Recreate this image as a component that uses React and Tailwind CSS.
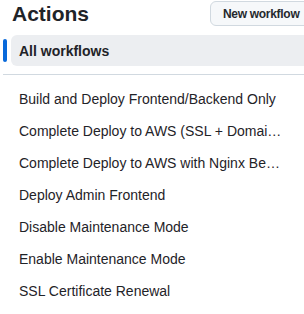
export default function App() {
  const items = [
    "Build and Deploy Frontend/Backend Only",
    "Complete Deploy to AWS (SSL + Domai…",
    "Complete Deploy to AWS with Nginx Be…",
    "Deploy Admin Frontend",
    "Disable Maintenance Mode",
    "Enable Maintenance Mode",
    "SSL Certificate Renewal",
  ];
  return (
    <div className="w-[304px] h-[314px] overflow-hidden bg-white" style={{ fontFamily: '"Liberation Sans", sans-serif' }}>
      <div className="w-[314px]">
        <div className="flex items-start justify-between h-[35px]">
          <h1 className="pl-3 pt-[1px] text-[21px] leading-[26px] font-semibold text-[#1f2328]">Actions</h1>
          <button className="mt-[1px] h-[25px] w-[104px] rounded-md border border-[#d1d9e0] bg-[#f6f8fa] text-[12px] font-semibold tracking-[-0.3px] text-[#25292e] leading-none text-left pl-[12px] whitespace-nowrap">
            New workflow
          </button>
        </div>
        <div className="flex items-center">
          <div className="w-[4px] h-[23px] ml-[3px] rounded-[3px] bg-[#0969da]" />
          <div className="ml-[4px] flex-1 h-[31px] rounded-md bg-[#eceef1] flex items-center pl-2 pt-px text-[14px] font-semibold text-[#1f2328]">
            All workflows
          </div>
        </div>
        <div className="ml-[3px] mt-[8px] h-px bg-[#d1d9e0]" />
        <ul className="mt-[8px]">
          {items.map((t) => (
            <li key={t} className="h-[32px] flex items-center pl-[19px]">
              <span className="block whitespace-nowrap text-[14px] text-[#1f2328]">{t}</span>
            </li>
          ))}
        </ul>
      </div>
    </div>
  );
}
